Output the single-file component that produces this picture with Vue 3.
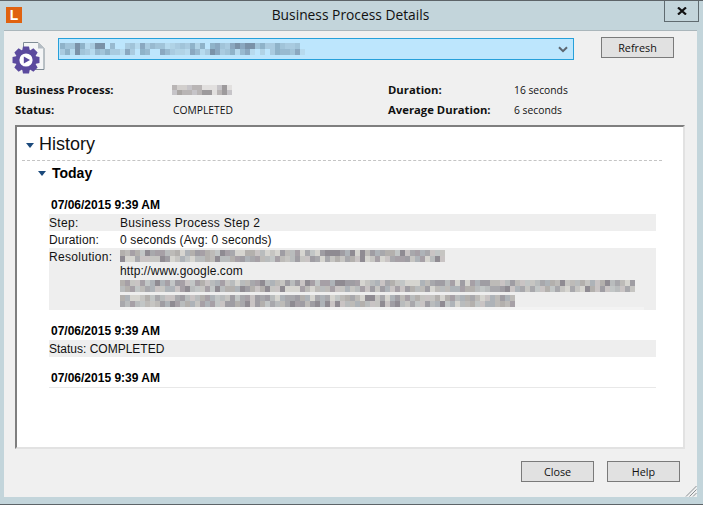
<template>
  <div class="window">
    <header class="titlebar">
      <span class="logo">L</span>
      <span class="title">Business Process Details</span>
      <button class="close-x" type="button" aria-label="Close">
        <svg width="10" height="8" viewBox="0 0 10 8"><path d="M1 0.5 L9 7.5 M9 0.5 L1 7.5" stroke="#111" stroke-width="2.2" fill="none" /></svg>
      </button>
    </header>

    <main class="client">
      <div class="picker">
        <svg class="bp-icon" width="34" height="34" viewBox="0 0 34 34">
          <path d="M11.5 1.5 H26 L32 7.5 V28.5 H19 M11.5 1.5 V8" fill="#f4f5f6" stroke="#7f8c96" stroke-width="1" />
          <path d="M26 1.5 V7.5 H32 Z" fill="#b4bcc4" />
          <path :d="gearPath" fill="#5b4a9e" />
          <circle cx="14" cy="19" r="6.6" fill="#fff" />
          <path d="M11.8 15.4 L18 19 L11.8 22.6 Z" fill="#5b4a9e" />
        </svg>
        <div class="combo">
          <div class="mosaic">
            <div v-for="(row, r) in comboBlur" :key="r" class="mosaic-row">
              <i v-for="(c, i) in row" :key="i" class="cell" :style="{ background: c }" />
            </div>
          </div>
          <svg class="chev" width="10" height="7" viewBox="0 0 10 7"><path d="M1 1.2 L5 5.2 L9 1.2" fill="none" stroke="#5c6670" stroke-width="2" /></svg>
        </div>
        <button class="btn refresh" type="button">Refresh</button>
      </div>

      <div class="summary">
        <b>Business Process:</b>
        <div class="mosaic small">
          <div v-for="(row, r) in nameBlur" :key="r" class="mosaic-row">
            <i v-for="(c, i) in row" :key="i" class="cell" :style="{ background: c }" />
          </div>
        </div>
        <b>Duration:</b>
        <span>16 seconds</span>
        <b>Status:</b>
        <span>COMPLETED</span>
        <b>Average Duration:</b>
        <span>6 seconds</span>
      </div>

      <section class="panel">
        <h2 class="history"><i class="tri" />History</h2>
        <h3 class="today"><i class="tri small-tri" />Today</h3>

        <div class="entry">
          <div class="stamp">07/06/2015 9:39 AM</div>
          <div class="row shade wider"><span class="key">Step:</span><span>Business Process Step 2</span></div>
          <div class="row wide"><span class="key">Duration:</span><span>0 seconds (Avg: 0 seconds)</span></div>
          <div class="row shade res">
            <span class="key res-key">Resolution:</span>
            <div class="res-body">
              <div class="mosaic">
                <div v-for="(row, r) in resBlur[0]" :key="r" class="mosaic-row">
                  <i v-for="(c, i) in row" :key="i" class="cell" :style="{ background: c }" />
                </div>
              </div>
              <div class="url">http://www.google.com</div>
              <div class="mosaic" v-for="(block, b) in resBlur.slice(1)" :key="b">
                <div v-for="(row, r) in block" :key="r" class="mosaic-row">
                  <i v-for="(c, i) in row" :key="i" class="cell" :style="{ background: c }" />
                </div>
              </div>
              <div class="res-tail" />
            </div>
          </div>
        </div>

        <div class="entry">
          <div class="stamp">07/06/2015 9:39 AM</div>
          <div class="row shade"><span>Status: COMPLETED</span></div>
        </div>

        <div class="entry last">
          <div class="stamp">07/06/2015 9:39 AM</div>
        </div>
      </section>

      <footer class="actions">
        <button class="btn" type="button">Close</button>
        <button class="btn" type="button">Help</button>
      </footer>

      <svg class="grip" width="12" height="12" viewBox="0 0 12 12">
        <path d="M11.5 1 L1 11.5 M11.5 4.5 L4.5 11.5 M11.5 8 L8 11.5" stroke="#8a8f93" stroke-width="1" fill="none" />
      </svg>
    </main>
  </div>
</template>

<script setup>
// blurred-out text is a grid of 5px cells, same idea as the pixelated original
function mosaic(widthPx, seed, palette) {
  let s = seed;
  const next = () => {
    s = (s * 16807) % 2147483647;
    return s / 2147483647;
  };
  const cols = Math.round(widthPx / 5);
  return [0, 1].map(() => {
    const row = [];
    for (let i = 0; i < cols; i++) row.push(palette[Math.floor(next() * palette.length)]);
    return row;
  });
}

const grey = ["#b3b0ad", "#a8a8ac", "#bdbbb8", "#c6c5c2", "#9f9da3", "#b9bcbd", "#aeb3b8", "#c9c4c4", "#8f8b92", "#c2c6c6", "#d6d5d0", "#a6a0a6"];
const blue = ["#8fb3c9", "#a1c4d9", "#7a92a8", "#b0d3e6", "#98bad0", "#a9cbe0", "#8aa8c0", "#b6daee", "#bde6fd"];

const comboBlur = mosaic(245, 77, blue);
const nameBlur = mosaic(58, 19, ["#b9b5b5", "#9d9a9c", "#d2cfcd", "#aaa6a4", "#c6c4c8", "#e2e0df"]);
const resBlur = [mosaic(325, 131, grey), mosaic(515, 4242, grey), mosaic(395, 909, grey)];

const gearPath = (() => {
  const cx = 14;
  const cy = 19;
  const teeth = 8;
  let d = "";
  for (let i = 0; i < teeth; i++) {
    const a = (i / teeth) * Math.PI * 2;
    const pts = [
      [10.6, a - 0.36],
      [13.8, a - 0.22],
      [13.8, a + 0.22],
      [10.6, a + 0.36],
    ];
    for (const [r, t] of pts) {
      d += `${d ? "L" : "M"}${(cx + r * Math.cos(t)).toFixed(2)} ${(cy + r * Math.sin(t)).toFixed(2)} `;
    }
  }
  return d + "Z";
})();
</script>

<style>
html,
body {
  margin: 0;
  overflow: hidden;
}
</style>

<style scoped>
.window {
  box-sizing: border-box;
  width: 703px;
  height: 505px;
  display: flex;
  flex-direction: column;
  background: #c3d5db;
  border-top: 1px solid #5d6468;
  border-bottom: 1px solid #5d6468;
  padding: 0 6px 7px 4px;
  font-family: "Liberation Sans", Arial, sans-serif;
  color: #000;
}

.titlebar {
  height: 29px;
  flex: none;
  display: flex;
  align-items: flex-start;
  margin: 0 -6px 0 -4px;
  padding-left: 6px;
}

.logo {
  width: 16px;
  height: 16px;
  margin-top: 6px;
  background: #e0620f;
  color: #fff;
  font: bold 14px/16px "Liberation Sans", sans-serif;
  text-align: center;
}

.title {
  flex: 1;
  text-align: center;
  font: 13.8px/28px "Open Sans", sans-serif;
  color: #111;
  margin-right: -15px;
}

.close-x {
  box-sizing: border-box;
  width: 35px;
  height: 21px;
  margin-right: 4px;
  padding: 0;
  display: flex;
  align-items: center;
  justify-content: center;
  background: transparent;
  border: 1px solid #5f6b70;
  border-top: none;
}

.client {
  flex: 1;
  position: relative;
  display: flex;
  flex-direction: column;
  background: #f0f0f0;
  border-top: 1px solid #aab6bb;
  padding: 6px 12px 0 11px;
  min-height: 0;
}

.picker {
  display: flex;
  align-items: flex-start;
  height: 44px;
  flex: none;
}

.bp-icon {
  margin: 4px 0 0 -3px;
  width: 34px;
  height: 34px;
  flex: none;
  overflow: visible;
}

.combo {
  box-sizing: border-box;
  width: 516px;
  height: 22px;
  margin-left: 12px;
  margin-top: 1px;
  padding: 4px 3px 0 1px;
  display: flex;
  justify-content: space-between;
  background: #bde6fd;
  border: 1px solid #26a0da;
}

.chev {
  margin-top: 3px;
  margin-right: 2px;
}

.mosaic {
  display: flex;
  flex-direction: column;
  flex: none;
  align-self: flex-start;
}

.mosaic-row {
  display: flex;
  height: 6px;
}

.mosaic-row .cell {
  display: block;
  width: 5px;
  height: 100%;
  flex: none;
}

.small {
  margin-left: -1px;
  margin-top: 6px;
}

.small .mosaic-row {
  height: 5px;
}

.btn {
  box-sizing: border-box;
  width: 73px;
  height: 21px;
  padding: 0;
  background: #e1e1e1;
  border: 1px solid #7a7a7a;
  font: 10.8px "Open Sans", sans-serif;
  color: #111;
}

.refresh {
  margin-left: 27px;
}

.summary {
  display: grid;
  grid-template-columns: 158px 215px 126px 1fr;
  grid-auto-rows: 20px;
  align-items: center;
  flex: none;
  font: 10.3px "Open Sans", sans-serif;
  color: #111;
  margin-top: -2px;
}

.summary b {
  font-size: 11.3px;
  font-weight: 700;
}

.summary span {
  padding-top: 2px;
}

.panel {
  box-sizing: border-box;
  height: 324px;
  flex: none;
  margin-top: 6px;
  padding: 6px 21px 0 5px;
  background: #fff;
  border: 2px solid #e2e2e2;
  border-top-color: #7f7f7f;
  border-left-color: #7f7f7f;
}

.history {
  margin: 0;
  font-weight: 400;
  font-size: 18px;
  height: 23px;
  padding-bottom: 4px;
  color: #111;
  border-bottom: 1px dashed #c4c4c4;
  display: flex;
  align-items: center;
}

.tri {
  width: 0;
  height: 0;
  margin: 2px 5px 0 4px;
  border: 4.5px solid transparent;
  border-top: 5px solid #1c4a7c;
  border-bottom: none;
}

.today {
  margin: 4px 0 0 16px;
  font-size: 14px;
  line-height: 16px;
  display: flex;
  align-items: center;
}

.small-tri {
  margin: 1px 6px 0 0;
}

.entry {
  margin: 15px 6px 0 27px;
}

.entry:nth-of-type(n + 2) {
  margin-top: 12px;
}

.stamp {
  font-size: 12px;
  font-weight: 700;
  line-height: 16px;
  padding: 1px 0 0 2px;
  margin-bottom: 1px;
}

.row {
  display: flex;
  font-size: 12px;
  line-height: 16px;
  min-height: 16px;
  padding-top: 1px;
  color: #111;
}

.wide {
  letter-spacing: 0.15px;
}

.wider {
  letter-spacing: 0.3px;
}

.shade {
  background: #eee;
}

.key {
  width: 71px;
  flex: none;
}

.res-key {
  letter-spacing: 0.3px;
}

.res {
  box-sizing: border-box;
  height: 62px;
  padding-top: 0;
  line-height: 18px;
}

.res-body {
  padding-top: 2px;
  display: flex;
  flex-direction: column;
}

.url {
  line-height: 18px;
  height: 20px;
  letter-spacing: 0.1px;
}

.res-body .mosaic + .mosaic {
  margin-top: 3px;
}

.res-tail {
  width: 524px;
  height: 3px;
  background: #f3f3f3;
}

.last {
  border-bottom: 1px solid #e8e8e8;
}

.actions {
  display: flex;
  justify-content: flex-end;
  gap: 13px;
  padding: 12px 5px 0 0;
}

.grip {
  position: absolute;
  right: 0;
  bottom: 0;
}
</style>
